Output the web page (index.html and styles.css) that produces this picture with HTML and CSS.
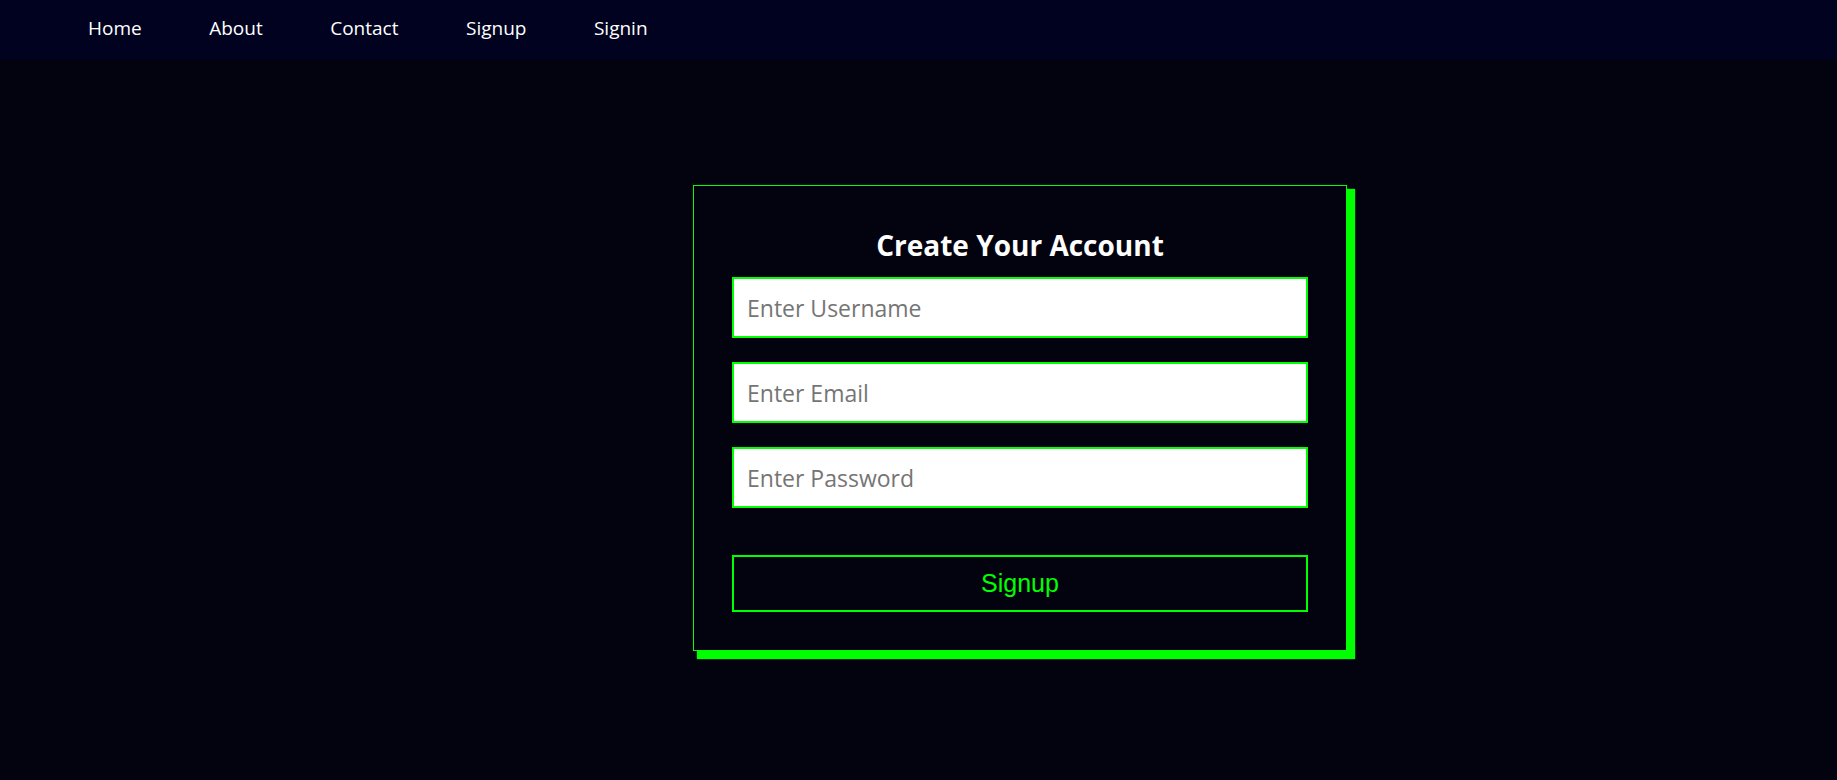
FILE: index.html
```html
<!DOCTYPE html>
<html lang="en">
<head>
<meta charset="utf-8">
<title>Signup</title>
<link rel="stylesheet" href="styles.css">
</head>
<body>
<nav class="navbar">
  <ul class="nav-list">
    <li><a href="#" class="nav-link">Home</a></li>
    <li><a href="#" class="nav-link">About</a></li>
    <li><a href="#" class="nav-link">Contact</a></li>
    <li><a href="#" class="nav-link">Signup</a></li>
    <li><a href="#" class="nav-link">Signin</a></li>
  </ul>
</nav>
<main class="page">
  <form class="card">
    <h2 class="card-title">Create Your Account</h2>
    <input class="field" type="text" placeholder="Enter Username">
    <input class="field" type="email" placeholder="Enter Email">
    <input class="field" type="password" placeholder="Enter Password">
    <button class="submit" type="button">Signup</button>
  </form>
</main>
</body>
</html>
```
FILE: styles.css
```css
html, body {
  margin: 0;
  padding: 0;
}
body {
  background: #03020f;
  font-family: "Open Sans", "Noto Sans", sans-serif;
  color: #fff;
  min-height: 780px;
}
.navbar {
  height: 60px;
  box-sizing: border-box;
  padding-bottom: 4px;
  background: #000220;
  display: flex;
  align-items: center;
}
.nav-list {
  list-style: none;
  margin: 0;
  padding: 0 0 0 88px;
  display: flex;
  gap: 67.5px;
}
.nav-link {
  color: #fff;
  text-decoration: none;
  font-size: 19px;
}
.page {
  padding: 125px 0 0 693px;
}
.card {
  width: 576px;
  padding: 38px 38px 38px 38px;
  border: 1px solid #00ff00;
  box-shadow: 6px 6px 1px 2px #00ff00;
  display: flex;
  flex-direction: column;
  background: #03020f;
}
.card-title {
  margin: 0 0 11px 0;
  text-align: center;
  font-size: 28px;
  font-weight: 700;
  color: #fff;
  line-height: 1.5;
}
.field {
  height: 61px;
  box-sizing: border-box;
  border: 2px solid #00ff00;
  background: #fff;
  padding: 0 13px;
  font-family: "Open Sans", "Noto Sans", sans-serif;
  font-size: 23px;
  margin: 0 0 24px 0;
  outline: none;
}
.field::placeholder {
  color: #757575;
}
.submit {
  margin-top: 23px;
  height: 57px;
  box-sizing: border-box;
  border: 2px solid #00ff00;
  background: transparent;
  color: #00ff00;
  font-family: "Liberation Sans", Arial, sans-serif;
  font-size: 25px;
  cursor: pointer;
}
```
